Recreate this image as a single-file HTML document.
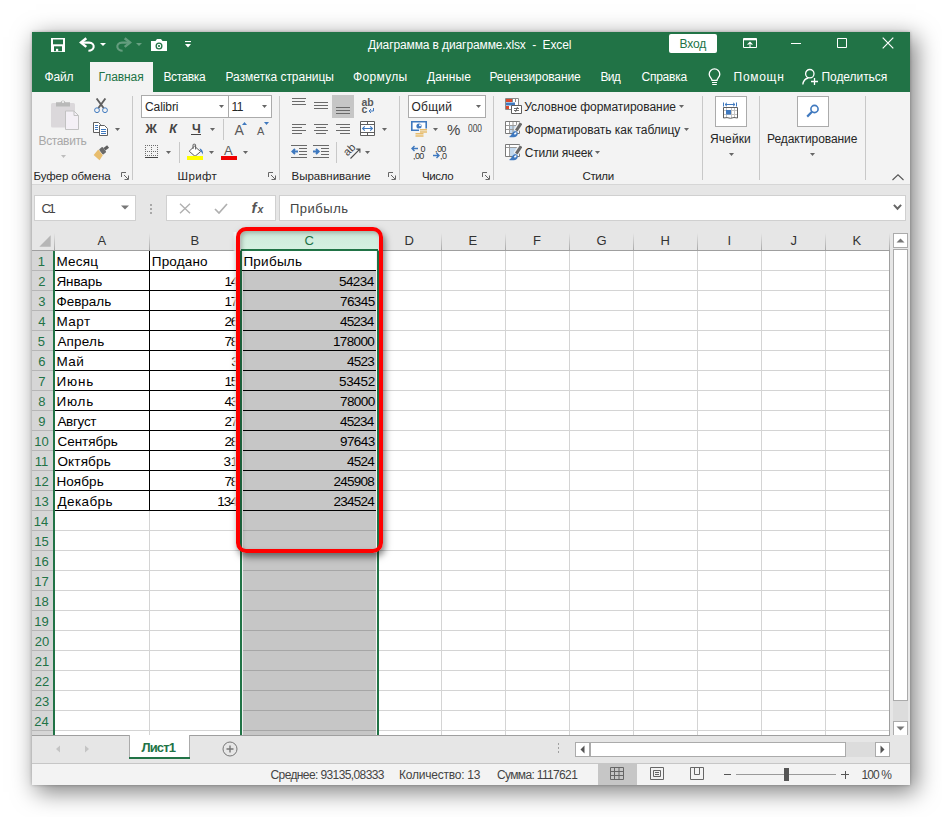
<!DOCTYPE html>
<html lang="ru"><head><meta charset="utf-8"><title>Диаграмма в диаграмме.xlsx - Excel</title>
<style>
html,body{margin:0;padding:0}
body{width:942px;height:817px;background:#fff;position:relative;overflow:hidden;font-family:"Liberation Sans", sans-serif;}
div,svg,span{position:absolute;}
.t{white-space:pre;line-height:1;}
</style></head>
<body>
<div style="left:32px;top:32px;width:878px;height:753px;background:#e6e6e6;box-shadow:5px 6px 22px 1px rgba(0,0,0,.50),0 0 3px rgba(0,0,0,.25);"></div>
<div style="left:32px;top:32px;width:878px;height:60px;background:#217346;"></div>
<div style="left:32px;top:92px;width:878px;height:92px;background:#f3f3f3;"></div>
<div style="left:32px;top:184px;width:878px;height:1px;background:#d6d6d6;"></div>
<div style="left:90px;top:62px;width:63px;height:30px;background:#f3f3f3;"></div>
<span class="t" style="top:39px;font-size:12px;color:#ffffff;letter-spacing:-0.114px;left:368.00px;">Диаграмма в диаграмме.xlsx&nbsp; -&nbsp; Excel</span>
<div style="left:669px;top:34px;width:48px;height:19px;background:#ffffff;border-radius:2px;"></div>
<span class="t" style="top:38px;font-size:12px;color:#217346;letter-spacing:-0.167px;left:679.50px;">Вход</span>
<span class="t" style="top:71px;font-size:12px;color:#ffffff;letter-spacing:-0.167px;left:44.50px;">Файл</span>
<span class="t" style="top:71px;font-size:12px;color:#217346;letter-spacing:-0.083px;left:98.50px;">Главная</span>
<span class="t" style="top:71px;font-size:12px;color:#ffffff;letter-spacing:-0.417px;left:163.50px;">Вставка</span>
<span class="t" style="top:71px;font-size:12px;color:#ffffff;letter-spacing:-0.031px;left:225.50px;">Разметка страницы</span>
<span class="t" style="top:71px;font-size:12px;color:#ffffff;letter-spacing:0.333px;left:353.00px;">Формулы</span>
<span class="t" style="top:71px;font-size:12px;color:#ffffff;letter-spacing:0.100px;left:427.00px;">Данные</span>
<span class="t" style="top:71px;font-size:12px;color:#ffffff;letter-spacing:-0.115px;left:489.50px;">Рецензирование</span>
<span class="t" style="top:71px;font-size:12px;color:#ffffff;letter-spacing:-0.750px;left:600.50px;">Вид</span>
<span class="t" style="top:71px;font-size:12px;color:#ffffff;letter-spacing:-0.250px;left:641.50px;">Справка</span>
<span class="t" style="top:71px;font-size:12px;color:#ffffff;letter-spacing:0.700px;left:733.60px;">Помощн</span>
<span class="t" style="top:71px;font-size:12px;color:#ffffff;letter-spacing:-0.056px;left:821.50px;">Поделиться</span>
<div style="left:132px;top:96px;width:1px;height:84px;background:#c8c8c8;"></div>
<div style="left:279px;top:96px;width:1px;height:84px;background:#c8c8c8;"></div>
<div style="left:399px;top:96px;width:1px;height:84px;background:#c8c8c8;"></div>
<div style="left:493px;top:96px;width:1px;height:84px;background:#c8c8c8;"></div>
<div style="left:702px;top:96px;width:1px;height:84px;background:#c8c8c8;"></div>
<div style="left:759px;top:96px;width:1px;height:84px;background:#c8c8c8;"></div>
<div style="left:865px;top:96px;width:1px;height:84px;background:#c8c8c8;"></div>
<div style="left:223px;top:119px;width:1px;height:21px;background:#c8c8c8;"></div>
<div style="left:179px;top:142px;width:1px;height:21px;background:#c8c8c8;"></div>
<div style="left:336px;top:142px;width:1px;height:21px;background:#c8c8c8;"></div>
<span class="t" style="top:171px;font-size:11.5px;color:#262626;letter-spacing:-0.091px;left:33.50px;">Буфер обмена</span>
<span class="t" style="top:171px;font-size:11.5px;color:#262626;letter-spacing:0.375px;left:177.50px;">Шрифт</span>
<span class="t" style="top:171px;font-size:11.5px;color:#262626;left:291.50px;">Выравнивание</span>
<span class="t" style="top:171px;font-size:11.5px;color:#262626;letter-spacing:-0.375px;left:422.00px;">Число</span>
<span class="t" style="top:171px;font-size:11.5px;color:#262626;letter-spacing:-0.375px;left:582.50px;">Стили</span>
<span class="t" style="top:135px;font-size:12px;color:#a8a8a8;letter-spacing:-0.357px;left:38.50px;">Вставить</span>
<div style="left:141px;top:95px;width:87px;height:22px;background:#ffffff;border:1px solid #ababab;box-sizing:content-box;width:86px;height:21px;"></div>
<div style="left:228px;top:95px;width:43px;height:22px;background:#ffffff;border:1px solid #ababab;box-sizing:content-box;width:42px;height:21px;"></div>
<span class="t" style="top:101px;font-size:12px;color:#262626;letter-spacing:-0.083px;left:145.00px;">Calibri</span>
<span class="t" style="top:101px;font-size:12px;color:#262626;letter-spacing:-0.500px;left:231.50px;">11</span>
<span class="t" style="top:123px;font-size:12.5px;font-weight:bold;color:#444444;left:145.50px;">Ж</span>
<span class="t" style="top:123px;font-size:12.5px;font-weight:bold;font-style:italic;color:#444444;left:169.30px;">К</span>
<span class="t" style="top:123px;font-size:12.5px;font-weight:bold;color:#444444;left:192.00px;">Ч</span>
<div style="left:191px;top:134px;width:10px;height:1px;background:#444444;"></div>
<div style="left:332px;top:95px;width:22px;height:23px;background:#c6c6c6;"></div>
<div style="left:408px;top:95px;width:78px;height:23px;background:#ffffff;border:1px solid #ababab;box-sizing:content-box;width:76px;height:21px;"></div>
<span class="t" style="top:101px;font-size:12px;color:#262626;letter-spacing:0.250px;left:411.50px;">Общий</span>
<span class="t" style="top:122px;font-size:15px;color:#444444;left:447.00px;">%</span>
<span class="t" style="top:124px;font-size:10px;color:#444444;left:467.60px;transform:scaleX(.84);transform-origin:0 0;">000</span>
<span class="t" style="top:101px;font-size:12px;color:#262626;letter-spacing:-0.045px;left:524.30px;">Условное форматирование</span>
<span class="t" style="top:124px;font-size:12px;color:#262626;letter-spacing:-0.021px;left:524.70px;">Форматировать как таблицу</span>
<span class="t" style="top:147px;font-size:12px;color:#262626;letter-spacing:-0.150px;left:524.70px;">Стили ячеек</span>
<div style="left:715px;top:96px;width:32px;height:31px;background:#ffffff;border:1px solid #ababab;box-sizing:border-box;"></div>
<div style="left:797px;top:96px;width:32px;height:31px;background:#ffffff;border:1px solid #ababab;box-sizing:border-box;"></div>
<span class="t" style="top:133px;font-size:12px;color:#262626;letter-spacing:0.100px;left:710.00px;">Ячейки</span>
<span class="t" style="top:133px;font-size:12px;color:#262626;letter-spacing:-0.077px;left:767.00px;">Редактирование</span>
<div style="left:34px;top:195px;width:102px;height:26px;background:#ffffff;border:1px solid #d0d0d0;box-sizing:border-box;"></div>
<span class="t" style="top:202px;font-size:13px;color:#444444;letter-spacing:-2.500px;left:41.50px;">C1</span>
<div style="left:166px;top:195px;width:110px;height:26px;background:#ffffff;border:1px solid #d0d0d0;box-sizing:border-box;"></div>
<div style="left:279px;top:195px;width:627px;height:26px;background:#ffffff;border:1px solid #d0d0d0;box-sizing:border-box;"></div>
<span class="t" style="top:202px;font-size:13px;color:#444444;letter-spacing:0.500px;left:290.00px;">Прибыль</span>
<div style="left:150px;top:204px;width:2px;height:1.5px;background:#a8a8a8;"></div>
<div style="left:150px;top:208px;width:2px;height:1.5px;background:#a8a8a8;"></div>
<div style="left:150px;top:212px;width:2px;height:1.5px;background:#a8a8a8;"></div>
<div style="left:55px;top:251px;width:835px;height:484px;background:#ffffff;"></div>
<div style="left:32px;top:251px;width:21px;height:484px;background:#d6d6d6;"></div>
<div style="left:241px;top:271px;width:136px;height:464px;background:#c6c6c6;"></div>
<div style="left:241px;top:231px;width:137px;height:18px;background:linear-gradient(#cfeadb,#d5f0e1);"></div>
<div style="left:241px;top:249px;width:137px;height:2px;background:#217346;"></div>
<div style="left:55px;top:270px;width:835px;height:1px;background:#d4d4d4;"></div>
<div style="left:241px;top:270px;width:136px;height:1px;background:#a6a6a6;"></div>
<div style="left:32px;top:270px;width:21px;height:1px;background:#b6b6b6;"></div>
<div style="left:55px;top:290px;width:835px;height:1px;background:#d4d4d4;"></div>
<div style="left:241px;top:290px;width:136px;height:1px;background:#a6a6a6;"></div>
<div style="left:32px;top:290px;width:21px;height:1px;background:#b6b6b6;"></div>
<div style="left:55px;top:310px;width:835px;height:1px;background:#d4d4d4;"></div>
<div style="left:241px;top:310px;width:136px;height:1px;background:#a6a6a6;"></div>
<div style="left:32px;top:310px;width:21px;height:1px;background:#b6b6b6;"></div>
<div style="left:55px;top:330px;width:835px;height:1px;background:#d4d4d4;"></div>
<div style="left:241px;top:330px;width:136px;height:1px;background:#a6a6a6;"></div>
<div style="left:32px;top:330px;width:21px;height:1px;background:#b6b6b6;"></div>
<div style="left:55px;top:350px;width:835px;height:1px;background:#d4d4d4;"></div>
<div style="left:241px;top:350px;width:136px;height:1px;background:#a6a6a6;"></div>
<div style="left:32px;top:350px;width:21px;height:1px;background:#b6b6b6;"></div>
<div style="left:55px;top:370px;width:835px;height:1px;background:#d4d4d4;"></div>
<div style="left:241px;top:370px;width:136px;height:1px;background:#a6a6a6;"></div>
<div style="left:32px;top:370px;width:21px;height:1px;background:#b6b6b6;"></div>
<div style="left:55px;top:390px;width:835px;height:1px;background:#d4d4d4;"></div>
<div style="left:241px;top:390px;width:136px;height:1px;background:#a6a6a6;"></div>
<div style="left:32px;top:390px;width:21px;height:1px;background:#b6b6b6;"></div>
<div style="left:55px;top:410px;width:835px;height:1px;background:#d4d4d4;"></div>
<div style="left:241px;top:410px;width:136px;height:1px;background:#a6a6a6;"></div>
<div style="left:32px;top:410px;width:21px;height:1px;background:#b6b6b6;"></div>
<div style="left:55px;top:430px;width:835px;height:1px;background:#d4d4d4;"></div>
<div style="left:241px;top:430px;width:136px;height:1px;background:#a6a6a6;"></div>
<div style="left:32px;top:430px;width:21px;height:1px;background:#b6b6b6;"></div>
<div style="left:55px;top:450px;width:835px;height:1px;background:#d4d4d4;"></div>
<div style="left:241px;top:450px;width:136px;height:1px;background:#a6a6a6;"></div>
<div style="left:32px;top:450px;width:21px;height:1px;background:#b6b6b6;"></div>
<div style="left:55px;top:470px;width:835px;height:1px;background:#d4d4d4;"></div>
<div style="left:241px;top:470px;width:136px;height:1px;background:#a6a6a6;"></div>
<div style="left:32px;top:470px;width:21px;height:1px;background:#b6b6b6;"></div>
<div style="left:55px;top:490px;width:835px;height:1px;background:#d4d4d4;"></div>
<div style="left:241px;top:490px;width:136px;height:1px;background:#a6a6a6;"></div>
<div style="left:32px;top:490px;width:21px;height:1px;background:#b6b6b6;"></div>
<div style="left:55px;top:510px;width:835px;height:1px;background:#d4d4d4;"></div>
<div style="left:241px;top:510px;width:136px;height:1px;background:#a6a6a6;"></div>
<div style="left:32px;top:510px;width:21px;height:1px;background:#b6b6b6;"></div>
<div style="left:55px;top:530px;width:835px;height:1px;background:#d4d4d4;"></div>
<div style="left:241px;top:530px;width:136px;height:1px;background:#a6a6a6;"></div>
<div style="left:32px;top:530px;width:21px;height:1px;background:#b6b6b6;"></div>
<div style="left:55px;top:550px;width:835px;height:1px;background:#d4d4d4;"></div>
<div style="left:241px;top:550px;width:136px;height:1px;background:#a6a6a6;"></div>
<div style="left:32px;top:550px;width:21px;height:1px;background:#b6b6b6;"></div>
<div style="left:55px;top:570px;width:835px;height:1px;background:#d4d4d4;"></div>
<div style="left:241px;top:570px;width:136px;height:1px;background:#a6a6a6;"></div>
<div style="left:32px;top:570px;width:21px;height:1px;background:#b6b6b6;"></div>
<div style="left:55px;top:590px;width:835px;height:1px;background:#d4d4d4;"></div>
<div style="left:241px;top:590px;width:136px;height:1px;background:#a6a6a6;"></div>
<div style="left:32px;top:590px;width:21px;height:1px;background:#b6b6b6;"></div>
<div style="left:55px;top:610px;width:835px;height:1px;background:#d4d4d4;"></div>
<div style="left:241px;top:610px;width:136px;height:1px;background:#a6a6a6;"></div>
<div style="left:32px;top:610px;width:21px;height:1px;background:#b6b6b6;"></div>
<div style="left:55px;top:630px;width:835px;height:1px;background:#d4d4d4;"></div>
<div style="left:241px;top:630px;width:136px;height:1px;background:#a6a6a6;"></div>
<div style="left:32px;top:630px;width:21px;height:1px;background:#b6b6b6;"></div>
<div style="left:55px;top:650px;width:835px;height:1px;background:#d4d4d4;"></div>
<div style="left:241px;top:650px;width:136px;height:1px;background:#a6a6a6;"></div>
<div style="left:32px;top:650px;width:21px;height:1px;background:#b6b6b6;"></div>
<div style="left:55px;top:670px;width:835px;height:1px;background:#d4d4d4;"></div>
<div style="left:241px;top:670px;width:136px;height:1px;background:#a6a6a6;"></div>
<div style="left:32px;top:670px;width:21px;height:1px;background:#b6b6b6;"></div>
<div style="left:55px;top:690px;width:835px;height:1px;background:#d4d4d4;"></div>
<div style="left:241px;top:690px;width:136px;height:1px;background:#a6a6a6;"></div>
<div style="left:32px;top:690px;width:21px;height:1px;background:#b6b6b6;"></div>
<div style="left:55px;top:710px;width:835px;height:1px;background:#d4d4d4;"></div>
<div style="left:241px;top:710px;width:136px;height:1px;background:#a6a6a6;"></div>
<div style="left:32px;top:710px;width:21px;height:1px;background:#b6b6b6;"></div>
<div style="left:55px;top:730px;width:835px;height:1px;background:#d4d4d4;"></div>
<div style="left:241px;top:730px;width:136px;height:1px;background:#a6a6a6;"></div>
<div style="left:32px;top:730px;width:21px;height:1px;background:#b6b6b6;"></div>
<div style="left:149px;top:251px;width:1px;height:484px;background:#d4d4d4;"></div>
<div style="left:240px;top:251px;width:1px;height:484px;background:#d4d4d4;"></div>
<div style="left:377px;top:251px;width:1px;height:484px;background:#d4d4d4;"></div>
<div style="left:441px;top:251px;width:1px;height:484px;background:#d4d4d4;"></div>
<div style="left:505px;top:251px;width:1px;height:484px;background:#d4d4d4;"></div>
<div style="left:569px;top:251px;width:1px;height:484px;background:#d4d4d4;"></div>
<div style="left:633px;top:251px;width:1px;height:484px;background:#d4d4d4;"></div>
<div style="left:697px;top:251px;width:1px;height:484px;background:#d4d4d4;"></div>
<div style="left:761px;top:251px;width:1px;height:484px;background:#d4d4d4;"></div>
<div style="left:825px;top:251px;width:1px;height:484px;background:#d4d4d4;"></div>
<div style="left:889px;top:251px;width:1px;height:484px;background:#d4d4d4;"></div>
<div style="left:32px;top:250px;width:858px;height:1px;background:#9f9f9f;"></div>
<div style="left:241px;top:249px;width:137px;height:2px;background:#217346;"></div>
<div style="left:149px;top:233px;width:1px;height:17px;background:linear-gradient(#e6e6e6,#a8a8a8);"></div>
<div style="left:441px;top:233px;width:1px;height:17px;background:linear-gradient(#e6e6e6,#a8a8a8);"></div>
<div style="left:505px;top:233px;width:1px;height:17px;background:linear-gradient(#e6e6e6,#a8a8a8);"></div>
<div style="left:569px;top:233px;width:1px;height:17px;background:linear-gradient(#e6e6e6,#a8a8a8);"></div>
<div style="left:633px;top:233px;width:1px;height:17px;background:linear-gradient(#e6e6e6,#a8a8a8);"></div>
<div style="left:697px;top:233px;width:1px;height:17px;background:linear-gradient(#e6e6e6,#a8a8a8);"></div>
<div style="left:761px;top:233px;width:1px;height:17px;background:linear-gradient(#e6e6e6,#a8a8a8);"></div>
<div style="left:825px;top:233px;width:1px;height:17px;background:linear-gradient(#e6e6e6,#a8a8a8);"></div>
<div style="left:889px;top:233px;width:1px;height:17px;background:linear-gradient(#e6e6e6,#a8a8a8);"></div>
<div style="left:54px;top:233px;width:1px;height:17px;background:linear-gradient(#e6e6e6,#a8a8a8);"></div>
<svg style="left:39px;top:235px;" width="12" height="12" viewBox="0 0 12 12"><path d="M11.7 0.3V11.7H0.3z" fill="#b6b6b6"/></svg>
<span class="t" style="top:234px;font-size:13px;color:#333333;left:97.50px;">A</span>
<span class="t" style="top:234px;font-size:13px;color:#333333;left:190.50px;">B</span>
<span class="t" style="top:234px;font-size:13px;color:#217346;left:304.50px;">C</span>
<span class="t" style="top:234px;font-size:13px;color:#333333;left:404.50px;">D</span>
<span class="t" style="top:234px;font-size:13px;color:#333333;left:468.50px;">E</span>
<span class="t" style="top:234px;font-size:13px;color:#333333;left:533.00px;">F</span>
<span class="t" style="top:234px;font-size:13px;color:#333333;left:596.50px;">G</span>
<span class="t" style="top:234px;font-size:13px;color:#333333;left:660.50px;">H</span>
<span class="t" style="top:234px;font-size:13px;color:#333333;left:727.50px;">I</span>
<span class="t" style="top:234px;font-size:13px;color:#333333;left:790.50px;">J</span>
<span class="t" style="top:234px;font-size:13px;color:#333333;left:852.50px;">K</span>
<span class="t" style="top:255px;font-size:13px;color:#217346;left:37.80px;">1</span>
<span class="t" style="top:275px;font-size:13px;color:#217346;left:38.30px;">2</span>
<span class="t" style="top:295px;font-size:13px;color:#217346;left:38.30px;">3</span>
<span class="t" style="top:315px;font-size:13px;color:#217346;left:38.30px;">4</span>
<span class="t" style="top:335px;font-size:13px;color:#217346;left:37.80px;">5</span>
<span class="t" style="top:355px;font-size:13px;color:#217346;left:38.30px;">6</span>
<span class="t" style="top:375px;font-size:13px;color:#217346;left:38.30px;">7</span>
<span class="t" style="top:395px;font-size:13px;color:#217346;left:38.30px;">8</span>
<span class="t" style="top:415px;font-size:13px;color:#217346;left:38.30px;">9</span>
<span class="t" style="top:435px;font-size:13px;color:#217346;left:34.30px;">10</span>
<span class="t" style="top:455px;font-size:13px;color:#217346;left:34.80px;">11</span>
<span class="t" style="top:475px;font-size:13px;color:#217346;left:34.30px;">12</span>
<span class="t" style="top:495px;font-size:13px;color:#217346;left:34.30px;">13</span>
<span class="t" style="top:515px;font-size:13px;color:#217346;left:33.80px;">14</span>
<span class="t" style="top:535px;font-size:13px;color:#217346;left:34.30px;">15</span>
<span class="t" style="top:555px;font-size:13px;color:#217346;left:34.30px;">16</span>
<span class="t" style="top:575px;font-size:13px;color:#217346;left:34.30px;">17</span>
<span class="t" style="top:595px;font-size:13px;color:#217346;left:34.30px;">18</span>
<span class="t" style="top:615px;font-size:13px;color:#217346;left:34.30px;">19</span>
<span class="t" style="top:635px;font-size:13px;color:#217346;left:34.80px;">20</span>
<span class="t" style="top:655px;font-size:13px;color:#217346;left:34.80px;">21</span>
<span class="t" style="top:675px;font-size:13px;color:#217346;left:34.80px;">22</span>
<span class="t" style="top:695px;font-size:13px;color:#217346;left:34.80px;">23</span>
<span class="t" style="top:715px;font-size:13px;color:#217346;left:34.30px;">24</span>
<span class="t" style="top:255px;font-size:13.5px;color:#000000;letter-spacing:0.250px;left:56.40px;">Месяц</span>
<span class="t" style="top:275px;font-size:13.5px;color:#000000;letter-spacing:-0.100px;left:56.40px;">Январь</span>
<span class="t" style="top:295px;font-size:13.5px;color:#000000;left:56.40px;">Февраль</span>
<span class="t" style="top:315px;font-size:13.5px;color:#000000;letter-spacing:0.500px;left:56.40px;">Март</span>
<span class="t" style="top:335px;font-size:13.5px;color:#000000;letter-spacing:0.200px;left:57.40px;">Апрель</span>
<span class="t" style="top:355px;font-size:13.5px;color:#000000;letter-spacing:0.500px;left:56.40px;">Май</span>
<span class="t" style="top:375px;font-size:13.5px;color:#000000;letter-spacing:0.833px;left:56.40px;">Июнь</span>
<span class="t" style="top:395px;font-size:13.5px;color:#000000;letter-spacing:0.833px;left:56.40px;">Июль</span>
<span class="t" style="top:415px;font-size:13.5px;color:#000000;letter-spacing:-0.300px;left:57.40px;">Август</span>
<span class="t" style="top:435px;font-size:13.5px;color:#000000;left:57.40px;">Сентябрь</span>
<span class="t" style="top:455px;font-size:13.5px;color:#000000;letter-spacing:0.167px;left:57.40px;">Октябрь</span>
<span class="t" style="top:475px;font-size:13.5px;color:#000000;letter-spacing:0.100px;left:56.40px;">Ноябрь</span>
<span class="t" style="top:495px;font-size:13.5px;color:#000000;letter-spacing:0.417px;left:57.40px;">Декабрь</span>
<span class="t" style="top:255px;font-size:13.5px;color:#000000;letter-spacing:0.167px;left:151.80px;">Продано</span>
<span class="t" style="top:255px;font-size:13.5px;color:#000000;letter-spacing:0.250px;left:243.40px;">Прибыль</span>
<span class="t" style="top:275px;font-size:13.5px;color:#000000;letter-spacing:-1.100px;left:224.40px;">14</span>
<span class="t" style="top:275px;font-size:13.5px;color:#000000;letter-spacing:-0.575px;left:339.00px;">54234</span>
<span class="t" style="top:295px;font-size:13.5px;color:#000000;letter-spacing:-1.100px;left:224.40px;">17</span>
<span class="t" style="top:295px;font-size:13.5px;color:#000000;letter-spacing:-0.575px;left:340.00px;">76345</span>
<span class="t" style="top:315px;font-size:13.5px;color:#000000;letter-spacing:-1.200px;left:224.50px;">26</span>
<span class="t" style="top:315px;font-size:13.5px;color:#000000;letter-spacing:-0.825px;left:340.00px;">45234</span>
<span class="t" style="top:335px;font-size:13.5px;color:#000000;letter-spacing:-1.200px;left:224.50px;">78</span>
<span class="t" style="top:335px;font-size:13.5px;color:#000000;letter-spacing:-0.660px;left:333.00px;">178000</span>
<span class="t" style="top:355px;font-size:13.5px;color:#000000;left:231.30px;">3</span>
<span class="t" style="top:355px;font-size:13.5px;color:#000000;letter-spacing:-0.767px;left:347.00px;">4523</span>
<span class="t" style="top:375px;font-size:13.5px;color:#000000;letter-spacing:-1.100px;left:224.40px;">15</span>
<span class="t" style="top:375px;font-size:13.5px;color:#000000;letter-spacing:-0.325px;left:339.00px;">53452</span>
<span class="t" style="top:395px;font-size:13.5px;color:#000000;letter-spacing:-1.200px;left:224.50px;">43</span>
<span class="t" style="top:395px;font-size:13.5px;color:#000000;letter-spacing:-0.575px;left:340.00px;">78000</span>
<span class="t" style="top:415px;font-size:13.5px;color:#000000;letter-spacing:-1.200px;left:224.50px;">27</span>
<span class="t" style="top:415px;font-size:13.5px;color:#000000;letter-spacing:-0.825px;left:340.00px;">45234</span>
<span class="t" style="top:435px;font-size:13.5px;color:#000000;letter-spacing:-1.200px;left:224.50px;">28</span>
<span class="t" style="top:435px;font-size:13.5px;color:#000000;letter-spacing:-0.575px;left:340.00px;">97643</span>
<span class="t" style="top:455px;font-size:13.5px;color:#000000;letter-spacing:-0.200px;left:223.50px;">31</span>
<span class="t" style="top:455px;font-size:13.5px;color:#000000;letter-spacing:-0.767px;left:347.00px;">4524</span>
<span class="t" style="top:475px;font-size:13.5px;color:#000000;letter-spacing:-1.200px;left:224.50px;">78</span>
<span class="t" style="top:475px;font-size:13.5px;color:#000000;letter-spacing:-0.760px;left:333.50px;">245908</span>
<span class="t" style="top:495px;font-size:13.5px;color:#000000;letter-spacing:-0.950px;left:217.20px;">134</span>
<span class="t" style="top:495px;font-size:13.5px;color:#000000;letter-spacing:-0.760px;left:333.50px;">234524</span>
<div style="left:232.6px;top:232px;width:3.4px;height:316px;background:linear-gradient(90deg,rgba(255,255,255,0),rgba(255,255,255,.55) 45%,rgba(255,255,255,.95));"></div>
<div style="left:55px;top:270px;width:322px;height:1px;background:#000000;"></div>
<div style="left:55px;top:290px;width:322px;height:1px;background:#000000;"></div>
<div style="left:55px;top:310px;width:322px;height:1px;background:#000000;"></div>
<div style="left:55px;top:330px;width:322px;height:1px;background:#000000;"></div>
<div style="left:55px;top:350px;width:322px;height:1px;background:#000000;"></div>
<div style="left:55px;top:370px;width:322px;height:1px;background:#000000;"></div>
<div style="left:55px;top:390px;width:322px;height:1px;background:#000000;"></div>
<div style="left:55px;top:410px;width:322px;height:1px;background:#000000;"></div>
<div style="left:55px;top:430px;width:322px;height:1px;background:#000000;"></div>
<div style="left:55px;top:450px;width:322px;height:1px;background:#000000;"></div>
<div style="left:55px;top:470px;width:322px;height:1px;background:#000000;"></div>
<div style="left:55px;top:490px;width:322px;height:1px;background:#000000;"></div>
<div style="left:55px;top:510px;width:322px;height:1px;background:#000000;"></div>
<div style="left:149px;top:251px;width:1px;height:260px;background:#000000;"></div>
<div style="left:240px;top:251px;width:1px;height:260px;background:#000000;"></div>
<div style="left:240px;top:251px;width:2px;height:484px;background:#217346;"></div>
<div style="left:377px;top:251px;width:2px;height:484px;background:#217346;"></div>
<div style="left:376px;top:251px;width:1px;height:484px;background:#f4f4f4;"></div>
<div style="left:242px;top:271px;width:1px;height:464px;background:#f0f0f0;"></div>
<div style="left:53px;top:251px;width:2px;height:484px;background:#217346;"></div>
<div style="left:889px;top:251px;width:1px;height:484px;background:#a0a0a0;"></div>
<div style="left:893px;top:233px;width:15px;height:15px;background:#ffffff;border:1px solid #ababab;box-sizing:border-box;"></div>
<div style="left:893px;top:701px;width:15px;height:20px;background:#dcdcdc;"></div>
<div style="left:893px;top:249px;width:15px;height:452px;background:#ffffff;border:1px solid #ababab;box-sizing:border-box;"></div>
<div style="left:893px;top:721px;width:15px;height:15px;background:#ffffff;border:1px solid #ababab;box-sizing:border-box;"></div>
<svg style="left:896px;top:238px;" width="9" height="5" viewBox="0 0 9 5"><path d="M0.5 4.5L4.5 0.5L8.5 4.5z" fill="#777"/></svg>
<svg style="left:896px;top:726px;" width="9" height="5" viewBox="0 0 9 5"><path d="M0.5 0.5L4.5 4.5L8.5 0.5z" fill="#777"/></svg>
<div style="left:32px;top:735px;width:878px;height:28px;background:#e6e6e6;"></div>
<div style="left:32px;top:735px;width:858px;height:1px;background:#9f9f9f;"></div>
<div style="left:129px;top:735px;width:61px;height:23px;background:#ababab;"></div>
<div style="left:130px;top:735px;width:59px;height:22px;background:#ffffff;"></div>
<div style="left:129px;top:757px;width:61px;height:2px;background:#217346;"></div>
<span class="t" style="top:741px;font-size:13px;font-weight:bold;color:#217346;letter-spacing:-0.875px;left:141.50px;">Лист1</span>
<svg style="left:55px;top:745px;" width="6" height="8" viewBox="0 0 6 8"><path d="M5 0.5V7.5L1 4z" fill="#c4c4c4"/></svg>
<svg style="left:84px;top:745px;" width="6" height="8" viewBox="0 0 6 8"><path d="M1 0.5V7.5L5 4z" fill="#c4c4c4"/></svg>
<svg style="left:222px;top:741px;" width="16" height="16" viewBox="0 0 16 16"><circle cx="8" cy="8" r="7" fill="none" stroke="#777" stroke-width="1"/><path d="M8 4.5v7M4.5 8h7" stroke="#777" stroke-width="1.4"/></svg>
<div style="left:558px;top:743px;width:1px;height:2px;background:#a0a0a0;"></div>
<div style="left:558px;top:747px;width:1px;height:2px;background:#a0a0a0;"></div>
<div style="left:558px;top:751px;width:1px;height:2px;background:#a0a0a0;"></div>
<div style="left:575px;top:742px;width:15px;height:15px;background:#ffffff;border:1px solid #ababab;box-sizing:border-box;"></div>
<div style="left:846px;top:742px;width:29px;height:15px;background:#dcdcdc;"></div>
<div style="left:590px;top:742px;width:256px;height:15px;background:#ffffff;border:1px solid #ababab;box-sizing:border-box;"></div>
<div style="left:875px;top:742px;width:15px;height:15px;background:#ffffff;border:1px solid #ababab;box-sizing:border-box;"></div>
<svg style="left:580px;top:745px;" width="5" height="9" viewBox="0 0 5 9"><path d="M4.5 0.5V8.5L0.5 4.5z" fill="#555"/></svg>
<svg style="left:880px;top:745px;" width="5" height="9" viewBox="0 0 5 9"><path d="M0.5 0.5V8.5L4.5 4.5z" fill="#555"/></svg>
<div style="left:32px;top:763px;width:878px;height:1px;background:#c6c6c6;"></div>
<div style="left:32px;top:764px;width:878px;height:21px;background:#f3f3f3;"></div>
<div style="left:598px;top:764px;width:39px;height:21px;background:#c6c6c6;"></div>
<span class="t" style="top:769px;font-size:12px;color:#444444;letter-spacing:-0.605px;left:270.50px;">Среднее: 93135,08333</span>
<span class="t" style="top:769px;font-size:12px;color:#444444;letter-spacing:-0.231px;left:399.00px;">Количество: 13</span>
<span class="t" style="top:769px;font-size:12px;color:#444444;letter-spacing:-0.654px;left:497.00px;">Сумма: 1117621</span>
<span class="t" style="top:769px;font-size:12px;color:#444444;letter-spacing:-0.875px;left:861.50px;">100 %</span>
<div style="left:736px;top:774px;width:100px;height:1px;background:#9a9a9a;"></div>
<div style="left:784px;top:768px;width:5px;height:13px;background:#555555;"></div>
<div style="left:724px;top:774px;width:7px;height:1px;background:#555555;"></div>
<div style="left:841px;top:774px;width:8px;height:1px;background:#555555;"></div>
<div style="left:844.5px;top:770.5px;width:1px;height:8px;background:#555555;"></div>
<div style="left:235.6px;top:226.6px;width:147.2px;height:326.4px;box-sizing:border-box;border:4.4px solid #ff0000;border-radius:10px;box-shadow:2px 4px 7px rgba(0,0,0,.5), inset 2px 2px 4px rgba(0,0,0,.25);"></div>
<svg style="left:51px;top:38px;" width="14" height="14" viewBox="0 0 14 14"><path d="M0 0H14V14H0z" fill="#ffffff"/><path d="M2 1.5H12V6.3H2z" fill="#217346"/><path d="M3 8.3H11V13.2H3z" fill="#217346"/><path d="M5 10.8H7.2V13.2H5z" fill="#ffffff"/></svg>
<svg style="left:79px;top:37px;" width="17" height="16" viewBox="0 0 17 16"><path d="M7.3 1.3L2 5.6L7.3 9.9" fill="none" stroke="#ffffff" stroke-width="2.5"/><path d="M3 5.6H10C13.6 5.6 15.1 8 14.6 10.4C14.1 12.6 12 13.7 9.4 13.7" fill="none" stroke="#ffffff" stroke-width="2.1"/></svg>
<svg style="left:100px;top:43px;" width="6" height="3" viewBox="0 0 6 3"><path d="M0 0H6L3.0 3z" fill="#ffffff"/></svg>
<svg style="left:115px;top:37px;" width="17" height="16" viewBox="0 0 17 16"><g opacity=".3"><path d="M9.7 1.3L15 5.6L9.7 9.9" fill="none" stroke="#ffffff" stroke-width="2.5"/><path d="M14 5.6H7C3.4 5.6 1.9 8 2.4 10.4C2.9 12.6 5 13.7 7.6 13.7" fill="none" stroke="#ffffff" stroke-width="2.1"/></g></svg>
<svg style="left:136px;top:43px;" width="6" height="3" viewBox="0 0 6 3"><path d="M0 0H6L3.0 3z" fill="rgba(255,255,255,.32)"/></svg>
<svg style="left:151px;top:39px;" width="16" height="12" viewBox="0 0 16 12"><path d="M0 2H4.5L6 0H10L11.5 2H16V12H0z" fill="#ffffff"/><circle cx="8" cy="7" r="3.5" fill="#217346"/><circle cx="8" cy="7" r="2.2" fill="#ffffff"/><circle cx="8" cy="7" r="1.1" fill="#217346"/></svg>
<svg style="left:185px;top:41px;" width="6" height="7" viewBox="0 0 6 7"><path d="M0 0.5H6" stroke="#ffffff" stroke-width="1.2"/><path d="M0 3H6L3 6.5z" fill="#ffffff"/></svg>
<svg style="left:743px;top:38px;" width="14" height="10" viewBox="0 0 14 10"><path d="M0.5 0.5H13.5V9.5H0.5z" fill="none" stroke="#ffffff"/><path d="M0.5 1.5H13.5" stroke="#ffffff" stroke-width="1.6"/><path d="M7 9V4.5M4.6 6.7L7 4.3L9.4 6.7" fill="none" stroke="#ffffff" stroke-width="1.1"/></svg>
<div style="left:791px;top:43px;width:10px;height:1px;background:#ffffff;"></div>
<svg style="left:837px;top:38px;" width="10" height="10" viewBox="0 0 10 10"><path d="M0.5 0.5H9.5V9.5H0.5z" fill="none" stroke="#ffffff"/></svg>
<svg style="left:882px;top:37px;" width="12" height="12" viewBox="0 0 12 12"><path d="M0.7 0.7L11.3 11.3M11.3 0.7L0.7 11.3" stroke="#ffffff" stroke-width="1.2"/></svg>
<svg style="left:707px;top:68px;" width="15" height="18" viewBox="0 0 15 18"><path d="M5 12.3C5 10.2 2.2 9.3 2.2 6.2A5.3 5.3 0 0 1 12.8 6.2C12.8 9.3 10 10.2 10 12.3z" fill="none" stroke="#ffffff" stroke-width="1.3"/><path d="M5 14.5H10M5.2 16.5H9.8" stroke="#ffffff" stroke-width="1.2"/></svg>
<svg style="left:802px;top:68px;" width="17" height="18" viewBox="0 0 17 18"><circle cx="7.8" cy="5.7" r="4.2" fill="none" stroke="#ffffff" stroke-width="1.3"/><path d="M0.8 16.5C1.3 12.5 3.8 10.5 6.3 10" fill="none" stroke="#ffffff" stroke-width="1.3"/><path d="M12.5 10V17M9 13.5H16" stroke="#ffffff" stroke-width="1.3"/></svg>
<svg style="left:51px;top:99px;" width="29" height="32" viewBox="0 0 29 32"><rect x="0" y="4" width="24" height="24.5" rx="1.5" fill="#dbd8db"/><path d="M5 3.2H9.6A2.6 2.6 0 0 1 14.4 3.2H19V7.5H5z" fill="#b9b9b9"/><circle cx="12" cy="3" r="1.1" fill="#f3f3f3"/><path d="M14.5 12H23L27.5 16.5V30.5H14.5z" fill="#f4f0f6" stroke="#c2c2c2"/><path d="M23 12V16.5H27.5" fill="none" stroke="#c2c2c2"/></svg>
<svg style="left:61px;top:155px;" width="5" height="3" viewBox="0 0 5 3"><path d="M0 0H5L2.5 3z" fill="#bdbdbd"/></svg>
<svg style="left:93px;top:98px;" width="16" height="16" viewBox="0 0 16 16"><path d="M3.6 0.5L10.6 10M12.4 0.5L5.4 10" stroke="#5f5f5f" stroke-width="1.9" fill="none"/><circle cx="4" cy="12.2" r="2.4" fill="#f3f3f3" stroke="#3f79bf" stroke-width="1"/><circle cx="12" cy="12.2" r="2.4" fill="#f3f3f3" stroke="#3f79bf" stroke-width="1"/></svg>
<svg style="left:93px;top:121px;" width="16" height="16" viewBox="0 0 16 16"><path d="M0.5 1.5H5.5L7.5 3.5V11.5H0.5z" fill="#fff" stroke="#5f5f5f"/><path d="M6.5 4.5H11.5L14.5 7.5V14.5H6.5z" fill="#fff" stroke="#5f5f5f"/><path d="M2 4.5H5M2 6.5H5M2 8.5H5M8 8.5H13M8 10.5H13M8 12.5H13" stroke="#3f79bf" stroke-width="1"/></svg>
<svg style="left:115px;top:128px;" width="5" height="3" viewBox="0 0 5 3"><path d="M0 0H5L2.5 3z" fill="#666"/></svg>
<svg style="left:92px;top:144px;" width="18" height="17" viewBox="0 0 18 17"><g transform="translate(9.3 7.8) rotate(-38)"><path d="M4 -1.6H8.6V1.6H4z" fill="#5f5f5f"/><rect x="-0.6" y="-3.3" width="4.6" height="6.6" rx="1" fill="#6a6a6a"/><path d="M-1 -3.7V3.7L-6.6 5.6L-8 -2.2z" fill="#e8bd6d"/></g></svg>
<svg style="left:121px;top:172px;" width="8" height="8" viewBox="0 0 8 8"><path d="M0.5 5V0.5H5" fill="none" stroke="#666"/><path d="M3 3L7 7M7.5 3.5V7.5H3.5" fill="none" stroke="#666"/></svg>
<svg style="left:268px;top:172px;" width="8" height="8" viewBox="0 0 8 8"><path d="M0.5 5V0.5H5" fill="none" stroke="#666"/><path d="M3 3L7 7M7.5 3.5V7.5H3.5" fill="none" stroke="#666"/></svg>
<svg style="left:388px;top:172px;" width="8" height="8" viewBox="0 0 8 8"><path d="M0.5 5V0.5H5" fill="none" stroke="#666"/><path d="M3 3L7 7M7.5 3.5V7.5H3.5" fill="none" stroke="#666"/></svg>
<svg style="left:482px;top:172px;" width="8" height="8" viewBox="0 0 8 8"><path d="M0.5 5V0.5H5" fill="none" stroke="#666"/><path d="M3 3L7 7M7.5 3.5V7.5H3.5" fill="none" stroke="#666"/></svg>
<svg style="left:219px;top:105px;" width="5" height="3" viewBox="0 0 5 3"><path d="M0 0H5L2.5 3z" fill="#666"/></svg>
<svg style="left:262px;top:105px;" width="5" height="3" viewBox="0 0 5 3"><path d="M0 0H5L2.5 3z" fill="#666"/></svg>
<svg style="left:210px;top:128px;" width="5" height="3" viewBox="0 0 5 3"><path d="M0 0H5L2.5 3z" fill="#666"/></svg>
<span class="t" style="top:123px;font-size:14px;color:#5a5a5a;left:234.50px;">A</span>
<svg style="left:242px;top:122px;" width="5" height="3" viewBox="0 0 5 3"><path d="M0 3L2.5 0L5 3z" fill="#3f79bf"/></svg>
<span class="t" style="top:126px;font-size:11px;color:#5a5a5a;left:257.00px;">A</span>
<svg style="left:264px;top:122px;" width="5" height="3" viewBox="0 0 5 3"><path d="M0 0H5L2.5 3z" fill="#3f79bf"/></svg>
<svg style="left:145px;top:145px;" width="14" height="14" viewBox="0 0 14 14"><path d="M0 0h1v1h-1zM0 2h1v1h-1zM0 4h1v1h-1zM0 6h1v1h-1zM0 8h1v1h-1zM0 10h1v1h-1zM2 0h1v1h-1zM2 6h1v1h-1zM2 10h1v1h-1zM4 0h1v1h-1zM4 6h1v1h-1zM4 10h1v1h-1zM6 0h1v1h-1zM6 2h1v1h-1zM6 4h1v1h-1zM6 6h1v1h-1zM6 8h1v1h-1zM6 10h1v1h-1zM8 0h1v1h-1zM8 6h1v1h-1zM8 10h1v1h-1zM10 0h1v1h-1zM10 6h1v1h-1zM10 10h1v1h-1zM12 0h1v1h-1zM12 2h1v1h-1zM12 4h1v1h-1zM12 6h1v1h-1zM12 8h1v1h-1zM12 10h1v1h-1z" fill="#6e6e6e" shape-rendering="crispEdges"/><path d="M0 12H13V13.4H0z" fill="#444" shape-rendering="crispEdges"/></svg>
<svg style="left:166px;top:151px;" width="5" height="3" viewBox="0 0 5 3"><path d="M0 0H5L2.5 3z" fill="#666"/></svg>
<svg style="left:187px;top:143px;" width="17" height="18" viewBox="0 0 17 18"><path d="M7.5 3.2L13.6 8.6L8 13.3L2.2 8.2z" fill="#fff" stroke="#5f5f5f" stroke-width="1"/><path d="M6 6V2Q6 1.2 7 1.2H7.6Q8.6 1.2 8.6 2V6.5" fill="none" stroke="#5f5f5f" stroke-width="1"/><path d="M12.6 5.2C15.2 6.2 16.6 8.6 15.8 11.8C15.2 10.2 14.6 9.2 13.6 8.6z" fill="#3f79bf"/><path d="M0 13H16V17H0z" fill="#ffff00"/></svg>
<svg style="left:209px;top:151px;" width="5" height="3" viewBox="0 0 5 3"><path d="M0 0H5L2.5 3z" fill="#666"/></svg>
<span class="t" style="top:144px;font-size:13px;color:#5a5a5a;left:224.00px;">A</span>
<div style="left:221px;top:156px;width:16px;height:4px;background:#f00000;"></div>
<svg style="left:243px;top:151px;" width="5" height="3" viewBox="0 0 5 3"><path d="M0 0H5L2.5 3z" fill="#666"/></svg>
<div style="left:292px;top:98px;width:14px;height:1px;background:#6a6a6a;"></div>
<div style="left:292px;top:101px;width:13px;height:1px;background:#6a6a6a;"></div>
<div style="left:292px;top:104px;width:14px;height:1px;background:#6a6a6a;"></div>
<div style="left:314px;top:102px;width:14px;height:1px;background:#6a6a6a;"></div>
<div style="left:314px;top:105px;width:14px;height:1px;background:#6a6a6a;"></div>
<div style="left:314px;top:108px;width:14px;height:1px;background:#6a6a6a;"></div>
<div style="left:336px;top:107px;width:14px;height:1px;background:#6a6a6a;"></div>
<div style="left:336px;top:110px;width:14px;height:1px;background:#6a6a6a;"></div>
<div style="left:336px;top:113px;width:14px;height:1px;background:#6a6a6a;"></div>
<div style="left:292px;top:124px;width:14px;height:1px;background:#6a6a6a;"></div>
<div style="left:292px;top:127px;width:10px;height:1px;background:#6a6a6a;"></div>
<div style="left:292px;top:130px;width:14px;height:1px;background:#6a6a6a;"></div>
<div style="left:292px;top:133px;width:10px;height:1px;background:#6a6a6a;"></div>
<div style="left:314.0px;top:124px;width:14px;height:1px;background:#6a6a6a;"></div>
<div style="left:316.0px;top:127px;width:10px;height:1px;background:#6a6a6a;"></div>
<div style="left:314.0px;top:130px;width:14px;height:1px;background:#6a6a6a;"></div>
<div style="left:316.0px;top:133px;width:10px;height:1px;background:#6a6a6a;"></div>
<div style="left:336px;top:124px;width:14px;height:1px;background:#6a6a6a;"></div>
<div style="left:340px;top:127px;width:10px;height:1px;background:#6a6a6a;"></div>
<div style="left:336px;top:130px;width:14px;height:1px;background:#6a6a6a;"></div>
<div style="left:340px;top:133px;width:10px;height:1px;background:#6a6a6a;"></div>
<span class="t" style="top:97px;font-size:10.5px;font-weight:bold;color:#5a5a5a;left:361.50px;">ab</span>
<span class="t" style="top:104px;font-size:10.5px;font-weight:bold;color:#5a5a5a;left:361.50px;">c</span>
<svg style="left:368px;top:108px;" width="6" height="5" viewBox="0 0 6 5"><path d="M5.5 0V3H1.5M3 1L1 3L3 5" fill="none" stroke="#3f79bf" stroke-width="1"/></svg>
<svg style="left:360px;top:121px;" width="15" height="15" viewBox="0 0 15 15"><path d="M0.5 0.5H14.5V14.5H0.5zM0.5 3.5H14.5M0.5 11.5H14.5M7.5 0.5V3.5M7.5 11.5V14.5" fill="#fff" stroke="#5f5f5f"/><path d="M3 7.5H12M4.8 5.4L2.6 7.5L4.8 9.6M10.2 5.4L12.4 7.5L10.2 9.6" fill="none" stroke="#3f79bf" stroke-width="1.1"/></svg>
<svg style="left:382px;top:128px;" width="5" height="3" viewBox="0 0 5 3"><path d="M0 0H5L2.5 3z" fill="#666"/></svg>
<svg style="left:291px;top:145px;" width="16" height="13" viewBox="0 0 16 13"><path d="M0 0.5H16M8 3.5H16M8 6.5H16M8 9.5H16M0 12.5H16" stroke="#6a6a6a"/><path d="M7 6.5H1.5M4 4L1.3 6.5L4 9" fill="none" stroke="#3f79bf" stroke-width="1.9"/></svg>
<svg style="left:313px;top:145px;" width="16" height="13" viewBox="0 0 16 13"><path d="M0 0.5H16M8 3.5H16M8 6.5H16M8 9.5H16M0 12.5H16" stroke="#6a6a6a"/><path d="M0 6.5H5.5M3 4L5.7 6.5L3 9" fill="none" stroke="#3f79bf" stroke-width="1.9"/></svg>
<svg style="left:343px;top:143px;" width="18" height="17" viewBox="0 0 18 17"><text x="0" y="0" font-size="11" fill="#444" transform="translate(4.6 13.6) rotate(-45)" font-family='"Liberation Sans",sans-serif'>ab</text><path d="M7.5 15.5L16.8 6.2M13.3 6.1H16.9V9.7" fill="none" stroke="#4a4a4a" stroke-width="1.1"/></svg>
<svg style="left:365px;top:151px;" width="5" height="3" viewBox="0 0 5 3"><path d="M0 0H5L2.5 3z" fill="#666"/></svg>
<svg style="left:476px;top:105px;" width="5" height="3" viewBox="0 0 5 3"><path d="M0 0H5L2.5 3z" fill="#666"/></svg>
<svg style="left:411px;top:121px;" width="17" height="17" viewBox="0 0 17 17"><path d="M0.8 0.8H15.2V9.2H0.8z" fill="#fff" stroke="#3f79bf" stroke-width="1.6"/><circle cx="8" cy="5" r="2.6" fill="#3f79bf"/><circle cx="9" cy="4.2" r="1" fill="#fff"/><path d="M8 7.5H16V11.5H8z" fill="#f3f3f3"/><path d="M9 8H16V9.5H9zM9 10.2H16V11.7H9zM4.5 12H12.5V13.5H4.5zM4.5 14.2H12.5V15.7H4.5z" fill="#e8bd6d"/></svg>
<svg style="left:433px;top:128px;" width="5" height="3" viewBox="0 0 5 3"><path d="M0 0H5L2.5 3z" fill="#666"/></svg>
<svg style="left:411px;top:144px;" width="16" height="16" viewBox="0 0 16 16"><path d="M7 4.5H1M3.5 2L1 4.5L3.5 7" fill="none" stroke="#3f79bf" stroke-width="1.4"/><text x="9.5" y="7.5" font-size="9" fill="#333" font-family='"Liberation Sans",sans-serif'>0</text><text x="2" y="14.5" font-size="9" letter-spacing="-.6" fill="#333" font-family='"Liberation Sans",sans-serif'>,00</text></svg>
<svg style="left:433px;top:144px;" width="16" height="16" viewBox="0 0 16 16"><path d="M0 11.5H6M3.5 9L6 11.5L3.5 14" fill="none" stroke="#3f79bf" stroke-width="1.4"/><text x="2" y="7.5" font-size="9" letter-spacing="-.6" fill="#333" font-family='"Liberation Sans",sans-serif'>,00</text><text x="7" y="14.5" font-size="9" letter-spacing="-.6" fill="#333" font-family='"Liberation Sans",sans-serif'>,0</text></svg>
<svg style="left:505px;top:98px;" width="17" height="16" viewBox="0 0 17 16"><path d="M0.5 0.5H13.5V11.5H0.5z" fill="#fff" stroke="#8a8a8a"/><path d="M1 1H7V4H1zM1 8H4V11H1z" fill="#d9482b"/><path d="M1 4.5H10V7.5H1z" fill="#3f79bf"/><path d="M7.5 1V4M10.5 1V4" stroke="#8a8a8a"/><path d="M6.5 7.5H16.5V15.5H6.5z" fill="#fff" stroke="#5f5f5f"/><path d="M9 10.5H14M9 12.5H14M12.5 9L10.5 14" stroke="#5f5f5f" stroke-width=".9"/></svg>
<svg style="left:505px;top:121px;" width="17" height="17" viewBox="0 0 17 17"><path d="M0.5 0.5H14.5V12.5H0.5z" fill="#fff" stroke="#7a7a7a"/><path d="M4.5 4.5H12.5V12H4.5z" fill="#c3d9ee"/><path d="M1 4.5H14M1 8.5H14M4.5 1V12M8 1V12M11.5 1V12" stroke="#9a9a9a" fill="none"/><path d="M16 2.2L11 10" stroke="#f3f3f3" stroke-width="5.5"/><path d="M16 2.2L11.3 9.6" stroke="#6a6a6a" stroke-width="3"/><path d="M3.8 16C6.5 15 6.8 10.6 10 10.2C12.4 10.2 13.4 12.2 12.4 14.2C11 16.8 6.5 16.5 3.8 16z" fill="#3f79bf"/><ellipse cx="10.3" cy="12.4" rx="1.4" ry=".9" fill="#fff" transform="rotate(-35 10.3 12.4)"/></svg>
<svg style="left:505px;top:144px;" width="17" height="17" viewBox="0 0 17 17"><path d="M0.5 0.5H14.5V12.5H0.5z" fill="#fff" stroke="#7a7a7a"/><path d="M4.5 4H13V12H4.5z" fill="#c3d9ee"/><path d="M1 3.5H14M4.5 1V12" stroke="#9a9a9a" fill="none"/><path d="M16 2.2L11 10" stroke="#f3f3f3" stroke-width="5.5"/><path d="M16 2.2L11.3 9.6" stroke="#6a6a6a" stroke-width="3"/><path d="M3.8 16C6.5 15 6.8 10.6 10 10.2C12.4 10.2 13.4 12.2 12.4 14.2C11 16.8 6.5 16.5 3.8 16z" fill="#3f79bf"/><ellipse cx="10.3" cy="12.4" rx="1.4" ry=".9" fill="#fff" transform="rotate(-35 10.3 12.4)"/></svg>
<svg style="left:679px;top:105px;" width="5" height="3" viewBox="0 0 5 3"><path d="M0 0H5L2.5 3z" fill="#666"/></svg>
<svg style="left:684px;top:128px;" width="5" height="3" viewBox="0 0 5 3"><path d="M0 0H5L2.5 3z" fill="#666"/></svg>
<svg style="left:595px;top:151px;" width="5" height="3" viewBox="0 0 5 3"><path d="M0 0H5L2.5 3z" fill="#666"/></svg>
<svg style="left:722px;top:101px;" width="18" height="20" viewBox="0 0 18 20"><path d="M1.5 1.5V5.5M14.5 1.5V5.5M3 3.5H13M5 1.8L3 3.5L5 5.2M11 1.8L13 3.5L11 5.2" fill="none" stroke="#3f79bf" stroke-width="1"/><path d="M2 9.5H15M2 13.5H15M4.5 7V17M9.5 7V17M12.5 7V17" fill="none" stroke="#c4c4c4"/><path d="M1.5 6.5H15.5V17L12 16.5L8.5 17.3L5 16.6L1.5 17z" fill="none" stroke="#5f5f5f"/><path d="M4 9H9V13.5H4z" fill="#3f79bf"/></svg>
<svg style="left:729px;top:153px;" width="5" height="3" viewBox="0 0 5 3"><path d="M0 0H5L2.5 3z" fill="#666"/></svg>
<svg style="left:806px;top:104px;" width="14" height="14" viewBox="0 0 14 14"><circle cx="8.5" cy="5" r="3.6" fill="none" stroke="#3f79bf" stroke-width="1.6"/><path d="M6 7.8L1.2 12.6" stroke="#3f79bf" stroke-width="2.2"/></svg>
<svg style="left:810px;top:153px;" width="5" height="3" viewBox="0 0 5 3"><path d="M0 0H5L2.5 3z" fill="#666"/></svg>
<svg style="left:892px;top:174px;" width="12" height="7" viewBox="0 0 12 7"><path d="M0.5 6L6 0.8L11.5 6" fill="none" stroke="#555" stroke-width="1.1"/></svg>
<svg style="left:121px;top:205px;" width="8" height="5" viewBox="0 0 8 5"><path d="M0 0.5H8L4 4.5z" fill="#777"/></svg>
<svg style="left:179px;top:203px;" width="12" height="11" viewBox="0 0 12 11"><path d="M1 0.8L11 10.2M11 0.8L1 10.2" stroke="#b0b0b0" stroke-width="1.4"/></svg>
<svg style="left:214px;top:203px;" width="14" height="11" viewBox="0 0 14 11"><path d="M1 6L5 10L13 1" fill="none" stroke="#b0b0b0" stroke-width="1.7"/></svg>
<span class="t" style="top:200px;font-size:15px;font-weight:bold;font-style:italic;color:#555;left:251.50px;font-family:"Liberation Serif",serif;">f</span>
<span class="t" style="top:204px;font-size:10.5px;font-weight:bold;font-style:italic;color:#555;left:257.50px;font-family:"Liberation Serif",serif;">x</span>
<svg style="left:893px;top:204px;" width="9" height="7" viewBox="0 0 9 7"><path d="M0.9 0.9L4.5 4.7L8.1 0.9" fill="none" stroke="#666" stroke-width="2"/></svg>
<svg style="left:610px;top:767px;" width="14" height="13" viewBox="0 0 14 13"><path d="M0.5 0.5H13.5V12.5H0.5zM0.5 4.5H13.5M0.5 8.5H13.5M4.5 0.5V12.5M9 0.5V12.5" fill="none" stroke="#666"/></svg>
<svg style="left:650px;top:767px;" width="14" height="13" viewBox="0 0 14 13"><path d="M0.5 0.5H13.5V12.5H0.5z" fill="none" stroke="#666"/><path d="M3.5 3.5H10.5V9.5H3.5zM5 5.5H9M5 7.5H9" fill="none" stroke="#666"/></svg>
<svg style="left:690px;top:767px;" width="14" height="13" viewBox="0 0 14 13"><path d="M0.5 0.5H13.5V12.5H0.5z" fill="none" stroke="#666"/><path d="M4.5 0.5V7.5H9.5V0.5" fill="none" stroke="#666"/></svg>
</body></html>
